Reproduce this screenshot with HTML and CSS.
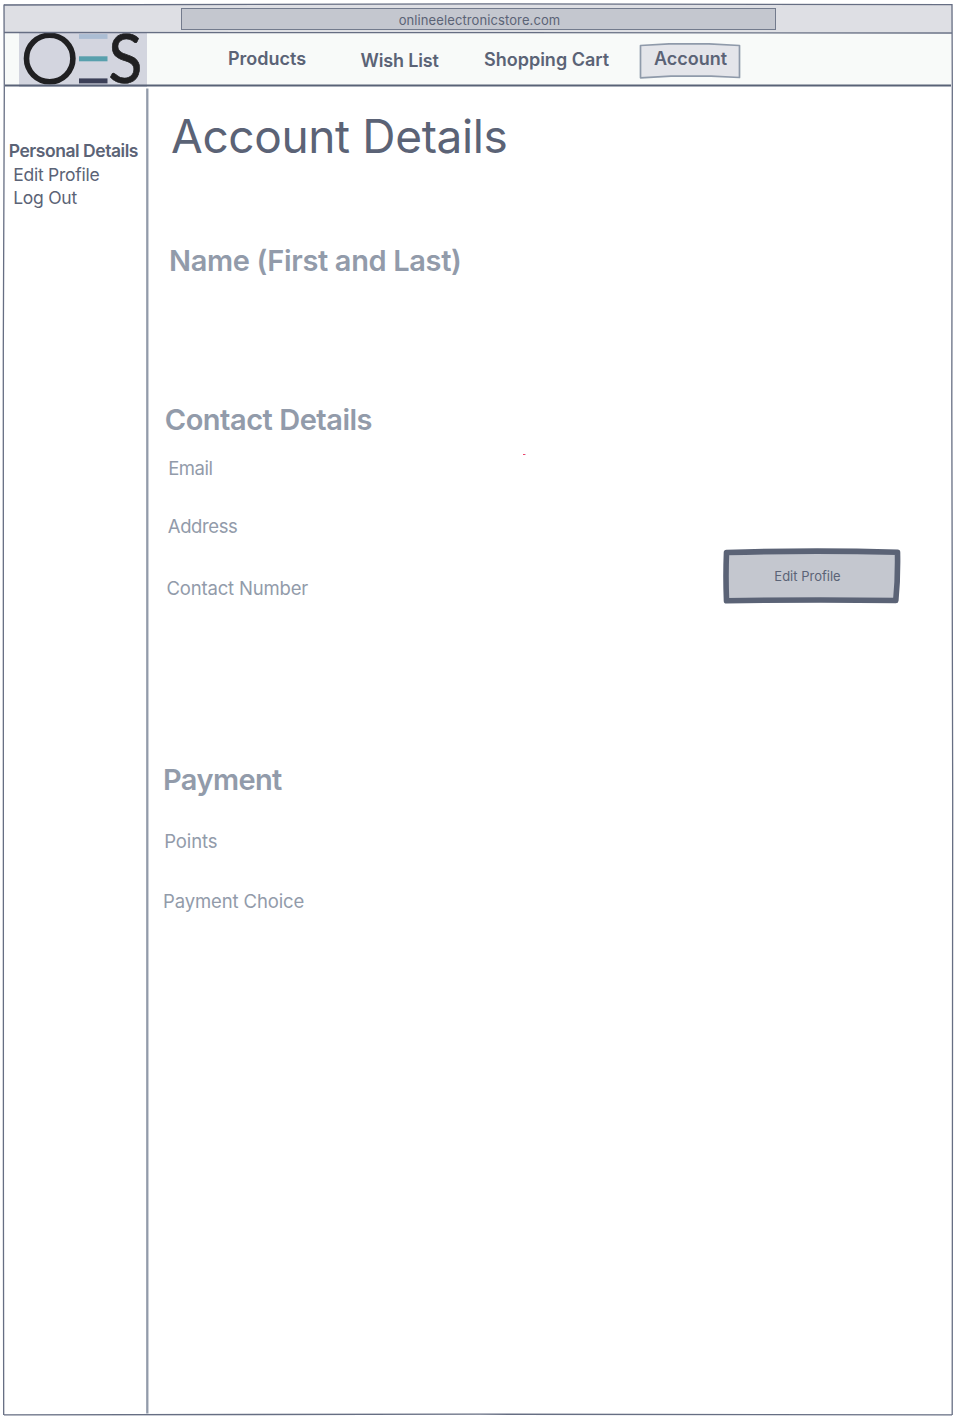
FILE: index.html
```html
<!DOCTYPE html>
<html lang="en">
<head>
<meta charset="utf-8">
<title>Account Details</title>
<link rel="stylesheet" href="styles.css">
</head>
<body>
<div class="page">
  <header class="browser-bar"><div class="address"><span class="url">onlineelectronicstore.com</span></div></header>
  <nav class="nav">
    <svg class="logo" viewBox="0 0 128 55" width="128" height="55" role="img" aria-label="OES">
      <rect width="128" height="55" fill="#d3d5df"/>
      <circle cx="30.700" cy="26.500" r="23.200" fill="none" stroke="#202022" stroke-width="5.600"/>
      <path d="M60 4.500h28.500" stroke="#abbdd3" stroke-width="4.800"/>
      <path d="M60 26.800h28.500" stroke="#58a0ad" stroke-width="5"/>
      <path d="M60 48.900h28.500" stroke="#3c4058" stroke-width="5"/>
      <text class="logo-s" transform="translate(89.300 51) scale(.94 1)">S</text>
    </svg>
    <a class="link products">Products</a>
    <a class="link wish">Wish List</a>
    <a class="link cart">Shopping Cart</a>
    <a class="account">
      <svg class="account-box" viewBox="0 0 102 38" width="102" height="38"><path d="M1.500 3.500L30 1.800H70L100.500 3.500V35.500L72 34.200H32L1.500 35.800Z" fill="#e4e5ea" stroke="#8f9aaa" stroke-width="1.700" stroke-linejoin="round"/></svg>
      <span class="link account-text">Account</span>
    </a>
  </nav>
  <div class="body">
    <aside class="sidebar">
      <span class="side personal">Personal Details</span>
      <span class="side edit">Edit Profile</span>
      <span class="side logout">Log Out</span>
    </aside>
    <main class="main">
      <div class="details">
        <h1 class="title">Account Details</h1>
        <h2 class="heading name">Name (First and Last)</h2>
        <h2 class="heading contact">Contact Details</h2>
        <p class="item email">Email</p>
        <p class="item addr">Address</p>
        <p class="item number">Contact Number</p>
        <h2 class="heading payment">Payment</h2>
        <p class="item points">Points</p>
        <p class="item choice">Payment Choice</p>
      </div>
      <div class="actions">
        <button class="button">
          <svg class="button-box" viewBox="0 0 178 57" width="178" height="57"><path d="M3.500 4.500Q88 2 174.500 4.200Q175 30 172.800 52.500Q88 51.300 3.500 52.800Q2.500 28 3.500 4.500Z" fill="#c4c7cf" stroke="#5b6376" stroke-width="5.600" stroke-linejoin="round"/></svg>
          <span class="button-text">Edit Profile</span>
        </button>
      </div>
    </main>
  </div>
  <!-- Hand-drawn outlines of the window, bars and sidebar -->
  <svg class="outline" viewBox="0 0 958 1418" width="958" height="1418" fill="none">
    <path class="ink" d="M4 5L480 3.900L952 4.600"/>
    <path class="ink" d="M4 32.500L480 32.600L952 33"/>
    <path class="ink" d="M4 4.500L4.300 90L3.300 350L3.400 1180L3.700 1415"/>
    <path class="ink" d="M952 4L952.300 90L951.800 400L952.700 800L952.200 1415"/>
    <path class="ink" d="M4 1414.800L480 1414.200L952 1414.800"/>
    <path class="rule" d="M5 85.400H951"/>
    <path class="divider" d="M147.300 88.500V1413.500"/>
    <path stroke="#f04468" d="M523 454.500h2"/>
    <path stroke="#d8b7d5" d="M525 454.500h1"/>
  </svg>
</div>
</body>
</html>
```
FILE: styles.css
```css
* { box-sizing: border-box; }
body { margin: 0; background: #fff; font-family: Inter, "Liberation Sans", sans-serif; color: #5b6376; }
h1, h2, p { margin: 0; }
.page { position: relative; width: 958px; height: 1418px; padding-top: 4px; overflow: hidden; }
.browser-bar { height: 28px; margin: 0 6px 0 4px; padding: 4px 0 0 177px; background: #dedfe4; }
.address { width: 595px; height: 22px; display: flex; justify-content: center; background: #c4c7cf; border: 1.500px solid #737b8d; }
.url { padding-left: 2px; font-size: 13px; line-height: 22px; letter-spacing: .1px; }
.nav { height: 53px; margin: 0 7px 0 5px; display: flex; align-items: flex-start; background: #f8faf9; }
.logo { margin-left: 14px; flex: none; overflow: visible; }
.logo-s { font: 67px Lato, sans-serif; fill: #202022; stroke: #202022; stroke-width: .7px; }
.link { font-size: 18px; font-weight: 600; line-height: 24px; white-space: nowrap; }
.products { margin: 15px 0 0 81px; width: 132.500px; letter-spacing: 0; }
.wish { margin-top: 17px; width: 123.500px; letter-spacing: -.15px; }
.cart { margin-top: 16px; width: 155px; }
.account { position: relative; margin-top: 10px; width: 102px; height: 38px; }
.account-box { position: absolute; inset: 0; }
.account-text { position: relative; display: block; padding: 5px 0 0 15px; }
.body { display: flex; height: 1328px; }
.sidebar { width: 148px; display: flex; flex-direction: column; padding: 54px 0 0 8.700px; }
.side { font-size: 17.500px; line-height: 23.500px; white-space: nowrap; }
.personal { font-weight: 600; letter-spacing: -.45px; }
.edit, .logout { margin-left: 4.500px; letter-spacing: -.25px; }
.main { display: flex; flex: 1; }
.details { width: 575px; }
.title { margin: 23px 0 0 23px; font-size: 46px; font-weight: 400; line-height: 56px; letter-spacing: -.36px; }
.heading { font-size: 29px; font-weight: 600; line-height: 36px; color: #929baa; }
.item { font-size: 18.500px; line-height: 24px; color: #929baa; }
.name { margin: 79.400px 0 0 21px; letter-spacing: -.35px; }
.contact { margin: 123px 0 0 16.800px; letter-spacing: -.48px; }
.email { margin: 17.600px 0 0 20.200px; letter-spacing: -.5px; }
.addr { margin: 34.300px 0 0 19.800px; letter-spacing: -.4px; }
.number { margin: 38px 0 0 18.500px; letter-spacing: -.18px; }
.payment { margin: 162px 0 0 15px; letter-spacing: -.6px; }
.points { margin: 31px 0 0 16.200px; letter-spacing: -.1px; }
.choice { margin: 35.500px 0 0 15px; letter-spacing: -.12px; }
.button { position: relative; width: 178px; height: 57px; margin-top: 463px; padding: 0 9px 1px 0; border: 0; background: none; font-family: inherit; }
.button-box { position: absolute; inset: 0; }
.button-text { position: relative; font-size: 13px; color: #5b6376; }
.outline { position: absolute; inset: 0; pointer-events: none; }
.ink { stroke: #666e83; stroke-width: 1.300px; }
.rule { stroke: #596277; stroke-width: 2px; }
.divider { stroke: #929baa; stroke-width: 2.300px; }
```
